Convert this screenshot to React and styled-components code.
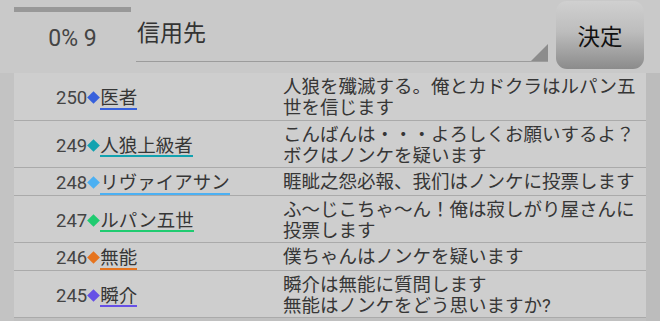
import styled, { createGlobalStyle } from "styled-components";

const GlobalStyle = createGlobalStyle`
  html, body {
    margin: 0;
    padding: 0;
    background: #c9c9c9;
  }
`;

const font = `Roboto, "Noto Sans CJK JP", sans-serif`;

const ScreenUI = styled.div`
  width: 660px;
  height: 321px;
  overflow: hidden;
  background: #c9c9c9;
  font-family: ${font};
  display: flex;
  flex-direction: column;
`;

const HeaderUI = styled.div`
  height: 73px;
  flex-shrink: 0;
  display: flex;
  align-items: stretch;
  padding: 0 16px 0 14px;
`;

const CounterUI = styled.div`
  width: 117px;
  display: flex;
  flex-direction: column;
  align-items: center;
`;

const ProgressUI = styled.div`
  width: 100%;
  height: 5px;
  margin-top: 7px;
  background: #989898;
`;

const CountTextUI = styled.div`
  margin-top: 12px;
  font-size: 23px;
  line-height: 30px;
  color: #444;
`;

const InputUI = styled.div`
  flex: 1;
  margin-left: 5px;
  margin-bottom: 11px;
  position: relative;
  border-bottom: 1.5px solid #9c9c9c;
  display: flex;
  align-items: flex-start;
`;

const InputTextUI = styled.div`
  font-size: 23px;
  line-height: 30px;
  margin-top: 19px;
  padding-left: 1px;
  color: #333;
`;

const CornerUI = styled.div`
  position: absolute;
  right: 0;
  bottom: 0;
  width: 0;
  height: 0;
  border-left: 17px solid transparent;
  border-bottom: 17px solid #8c8c8c;
`;

const ButtonUI = styled.div`
  width: 88px;
  height: 68px;
  margin: 1px 0 0 8px;
  border-radius: 11px;
  background: linear-gradient(to bottom, #d0d0d0 0%, #bdbdbd 45%, #8b8b8b 100%);
  display: flex;
  align-items: center;
  justify-content: center;
  font-size: 22.5px;
  color: #111;
`;

const BodyUI = styled.div`
  flex: 1;
  min-height: 0;
  display: flex;
  overflow: hidden;
  background: #c0c0c0;
`;

const SideUI = styled.div`
  width: 14px;
  flex-shrink: 0;
  background: ${props => props.shade};
`;

const ListUI = styled.div`
  flex: 1;
  align-self: flex-start;
  background: #cecece;
`;

const RowUI = styled.div`
  display: grid;
  grid-template-columns: 269px 1fr;
  border-bottom: 1.8px solid #aaaaaa;
  padding: 4px 0 0;
`;

const NameCellUI = styled.div`
  display: flex;
  align-items: center;
  padding-left: 42px;
`;

const LabelUI = styled.div`
  font-size: 18.5px;
  line-height: 22px;
  color: #444;
  white-space: nowrap;
`;

const DiamondUI = styled.span`
  display: inline-block;
  width: 9px;
  height: 9px;
  margin: 0 2px 0 2px;
  vertical-align: 2px;
  transform: rotate(45deg);
  background: ${props => props.color};
`;

const NameUI = styled.span`
  display: inline-block;
  line-height: 1;
  color: #363636;
  border-bottom: 2px solid ${props => props.color};
`;

const MessageUI = styled.div`
  width: 360px;
  font-size: 18.5px;
  line-height: 21.3px;
  color: #363636;
  white-space: pre-line;
`;

const rows = [
  { no: 250, name: "医者", color: "#3660dc", text: "人狼を殲滅する。俺とカドクラはルパン五世を信じます" },
  { no: 249, name: "人狼上級者", color: "#12a2b0", text: "こんばんは・・・よろしくお願いするよ？ボクはノンケを疑います" },
  { no: 248, name: "リヴァイアサン", color: "#4cb0f2", text: "睚眦之怨必報、我们はノンケに投票します" },
  { no: 247, name: "ルパン五世", color: "#1fcb70", text: "ふ～じこちゃ～ん！俺は寂しがり屋さんに投票します" },
  { no: 246, name: "無能", color: "#e6741f", text: "僕ちゃんはノンケを疑います" },
  { no: 245, name: "瞬介", color: "#6650e6", text: "瞬介は無能に質問します\n無能はノンケをどう思いますか?" },
];

export default function App() {
  return (
    <ScreenUI>
      <GlobalStyle />
      <HeaderUI>
        <CounterUI>
          <ProgressUI />
          <CountTextUI>0% 9</CountTextUI>
        </CounterUI>
        <InputUI>
          <InputTextUI>信用先</InputTextUI>
          <CornerUI />
        </InputUI>
        <ButtonUI>決定</ButtonUI>
      </HeaderUI>

      <BodyUI>
        <SideUI shade="#c3c3c3" />
        <ListUI>
          {rows.map(r => (
            <RowUI key={r.no}>
              <NameCellUI>
                <LabelUI>
                  {r.no}
                  <DiamondUI color={r.color} />
                  <NameUI color={r.color}>{r.name}</NameUI>
                </LabelUI>
              </NameCellUI>
              <MessageUI>{r.text}</MessageUI>
            </RowUI>
          ))}
        </ListUI>
        <SideUI shade="#bcbcbc" />
      </BodyUI>
    </ScreenUI>
  );
}
